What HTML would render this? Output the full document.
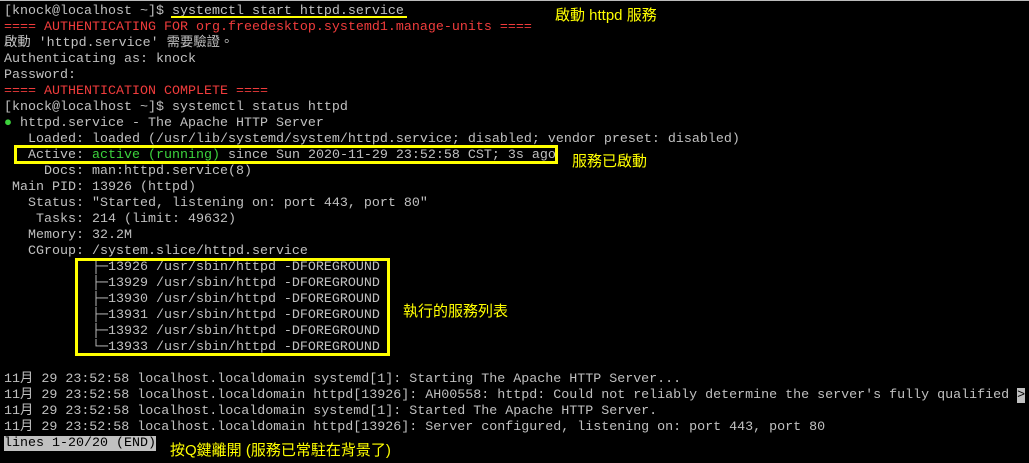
<!DOCTYPE html>
<html><head><meta charset="utf-8"><style>
html,body{margin:0;padding:0;background:#000;width:1029px;height:463px;overflow:hidden;position:relative}
.t{position:absolute;left:4px;top:4px;font-family:"Liberation Mono","Noto Sans CJK TC",monospace;font-size:13.33px;line-height:16px;color:#c0c0c0;white-space:pre}
.r{color:#f03c3c}.g{color:#3cd23c}
.a{position:absolute;color:#ffff00;font-family:"Liberation Sans","Noto Sans CJK TC",sans-serif;font-size:15px;white-space:nowrap}
.box{position:absolute;border:3px solid #ffff00;box-sizing:border-box}
.sel{background:#c0c0c0;color:#000}
</style></head><body>
<div style="position:absolute;left:0;top:0;width:1029px;height:1px;background:#bbb"></div>
<div class="t">[knock@localhost ~]$ systemctl start httpd.service
<span class="r">==== AUTHENTICATING FOR org.freedesktop.systemd1.manage-units ====</span>
啟動 'httpd.service' 需要驗證。
Authenticating as: knock
Password:
<span class="r">==== AUTHENTICATION COMPLETE ====</span>
[knock@localhost ~]$ systemctl status httpd
<span class="g">●</span> httpd.service - The Apache HTTP Server
   Loaded: loaded (/usr/lib/systemd/system/httpd.service; disabled; vendor preset: disabled)
   Active: <span class="g">active (running)</span> since Sun 2020-11-29 23:52:58 CST; 3s ago
     Docs: man:httpd.service(8)
 Main PID: 13926 (httpd)
   Status: "Started, listening on: port 443, port 80"
    Tasks: 214 (limit: 49632)
   Memory: 32.2M
   CGroup: /system.slice/httpd.service
           ├─13926 /usr/sbin/httpd -DFOREGROUND
           ├─13929 /usr/sbin/httpd -DFOREGROUND
           ├─13930 /usr/sbin/httpd -DFOREGROUND
           ├─13931 /usr/sbin/httpd -DFOREGROUND
           ├─13932 /usr/sbin/httpd -DFOREGROUND
           └─13933 /usr/sbin/httpd -DFOREGROUND

11月 29 23:52:58 localhost.localdomain systemd[1]: Starting The Apache HTTP Server...
11月 29 23:52:58 localhost.localdomain httpd[13926]: AH00558: httpd: Could not reliably determine the server's fully qualified <span class="sel">&gt;</span>
11月 29 23:52:58 localhost.localdomain systemd[1]: Started The Apache HTTP Server.
11月 29 23:52:58 localhost.localdomain httpd[13926]: Server configured, listening on: port 443, port 80
<span class="sel">lines 1-20/20 (END)</span></div>
<div style="position:absolute;left:171px;top:16px;width:236px;height:2px;background:#ffff00"></div>
<div class="box" style="left:14px;top:145px;width:544px;height:19px"></div>
<div class="box" style="left:75px;top:258px;width:315px;height:98px"></div>
<div class="a" style="left:555px;top:4px">啟動 httpd 服務</div>
<div class="a" style="left:572px;top:150px">服務已啟動</div>
<div class="a" style="left:403px;top:300px">執行的服務列表</div>
<div class="a" style="left:170px;top:439px">按Q鍵離開 (服務已常駐在背景了)</div>
</body></html>
